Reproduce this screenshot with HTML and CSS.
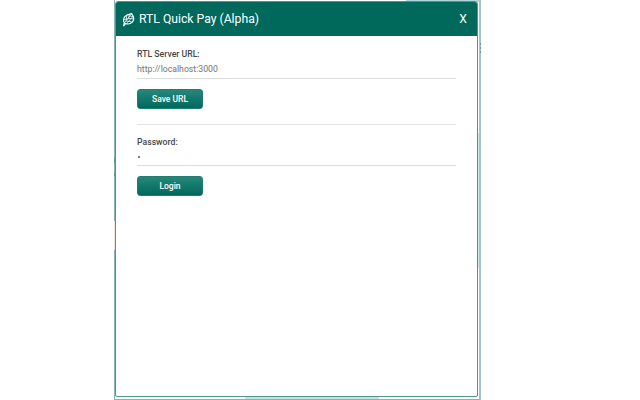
FILE: index.html
```
<!DOCTYPE html>
<html lang="en">
<head>
<meta charset="utf-8">
<title>RTL Quick Pay</title>
<link rel="stylesheet" href="styles.css">
</head>
<body>
<main class="backdrop">
  <i class="mark mark-top"></i><i class="mark mark-left"></i><i class="mark mark-left2"></i><i class="mark mark-pale"></i><i class="mark mark-bottom"></i><i class="mark mark-right"></i><i class="mark mark-dots"></i>
  <section class="popup">
    <header class="bar">
      <svg class="logo" viewBox="0 0 14 16" fill="none" stroke="#fff">
        <path d="M1.5 14.5 2.7 11C.9 8.7 1.5 5.3 4.1 3.4 6.3 1.7 9.2 1.7 10.3 1.1 13 4.5 13 8.2 10.9 10.5 8.8 12.3 5.8 12.5 4 11.8L1.5 14.5Z" stroke-width="1.3"/>
        <path d="M2.7 11 10.3 1.4M4.5 9 5 3.1M7 6.2 8 2.1M4.4 9 10.5 10M7 6.3l5.3.4M5.2 11.5 12 4M2.1 7.5l5-.9M9 4l3 .2" stroke-width=".8"/>
      </svg>
      <h1>RTL Quick Pay (Alpha)</h1>
      <span class="close">X</span>
    </header>
    <form class="content">
      <div class="group server">
        <label>RTL Server URL:</label>
        <div class="field hint">http://localhost:3000</div>
        <button type="button">Save URL</button>
      </div>
      <div class="group">
        <label>Password:</label>
        <div class="field"><span class="dot"></span></div>
        <button type="button">Login</button>
      </div>
    </form>
  </section>
</main>
</body>
</html>
```
FILE: styles.css
```
* { box-sizing: border-box; }
body { margin: 0; width: 640px; height: 400px; overflow: hidden; background: #fff; font-family: Roboto, "Liberation Sans", sans-serif; }
.backdrop { position: relative; width: 367px; height: 400px; margin-left: 114px; padding: 1px 2px 2px 0; background: #fff; border: solid #8eb1b2; border-width: 0 2px 1px 1px; border-right-color: #a0c8ca; }
.popup { position: relative; width: 363px; height: 396px; border: 1px solid #4a988c; border-radius: 3px 3px 2px 2px; overflow: hidden; background: #fff; }
.bar { display: flex; align-items: center; height: 34px; padding: 0 10px 0 6px; background: #00695c; color: #fff; }
.logo { width: 13px; height: 16px; margin-top: 2px; }
h1 { margin: 0 0 0 4px; font-size: 12.2px; line-height: 18px; font-weight: 400; white-space: nowrap; }
.close { margin-left: auto; font-size: 12.2px; line-height: 18px; }
.content { padding: 11px 21px; color: #303434; font-size: 8.7px; }
.group { display: flex; flex-direction: column; align-items: flex-start; }
.server { height: 78px; border-bottom: 1px solid #e3e3e3; margin-bottom: 10px; }
label { height: 14px; line-height: 14px; font-weight: 500; color: #444848; }
.field { width: 100%; height: 17px; line-height: 17px; border-bottom: 1px solid #dedede; }
.server .field { height: 18px; line-height: 16px; }
.hint { color: #747474; }
.dot { display: block; width: 2px; height: 2px; margin: 7px 0 0 1px; border-radius: 50%; background: #555; }
button { width: 66px; height: 20px; margin: 10px 0 0; padding: 0; border: 1px solid #237c70; border-radius: 3px; background: linear-gradient(#25877a, #00695c); color: #fff; font: 500 8.5px/17px Roboto, sans-serif; }
.mark { position: absolute; }
.mark-top { top: 0; right: 0; width: 73px; height: 2px; background: #aed6d9; }
.mark-left { left: -1px; top: 158px; width: 1px; height: 5px; background: #579fa3; }
.mark-left2 { left: -1px; top: 173px; width: 1px; height: 3px; background: #579fa3; }
.mark-pale { left: -1px; top: 221px; width: 1px; height: 29px; background: #f0e7e2; }
.mark-bottom { left: 130px; bottom: 0; width: 134px; height: 2px; background: #c9dfdf; }
.mark-right { right: 0; top: 133px; width: 1px; height: 135px; background: #d3e7e7; }
.mark-dots { right: -2px; top: 43px; width: 1px; height: 10px; background: repeating-linear-gradient(#6d9193 0 2px, #a0c8ca 2px 4px); }
```
